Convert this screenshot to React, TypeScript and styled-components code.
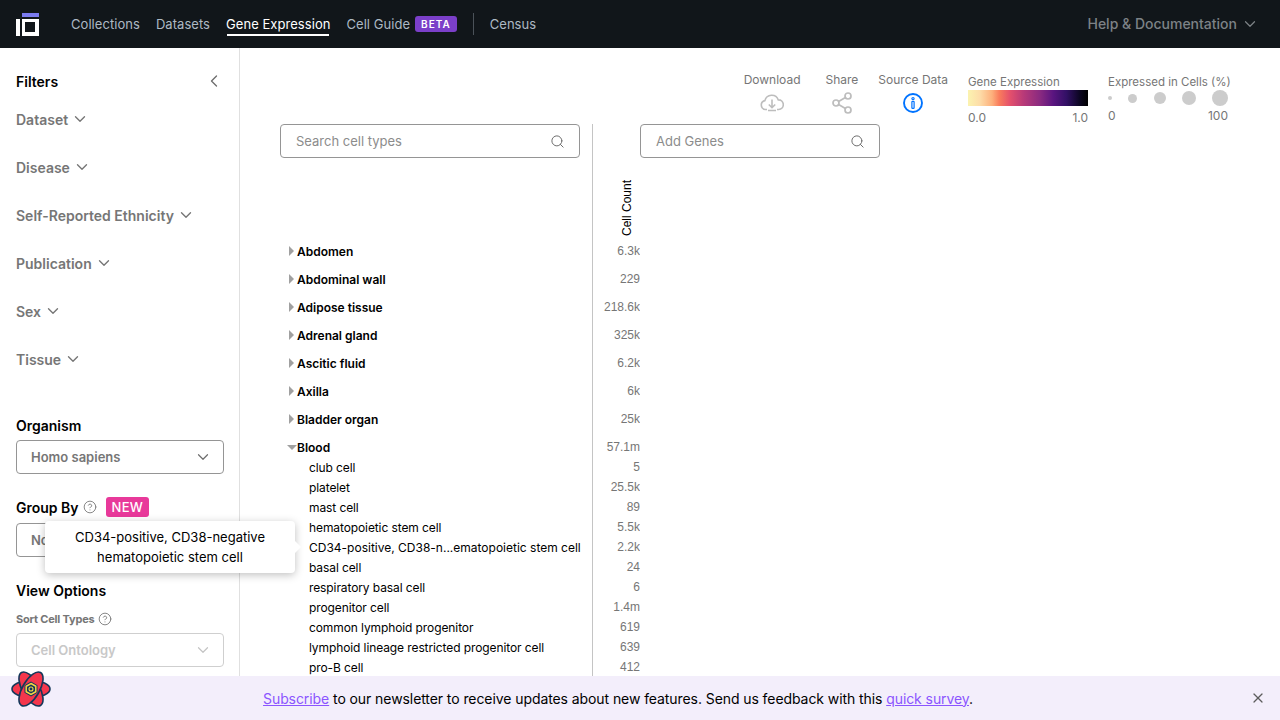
import styled, { createGlobalStyle } from 'styled-components';
import { ChevronDown, ChevronLeft, CircleHelp, Search, Share2, X } from 'lucide-react';

const GlobalStyle = createGlobalStyle`
  html, body {
    margin: 0;
    height: 100%;
    overflow: hidden;
    background: #fff;
    font-family: Inter, "Liberation Sans", sans-serif;
    color: #000;
  }
  * { box-sizing: border-box; }
`;

const Page = styled.div`
  height: 720px;
  display: flex;
  flex-direction: column;
  overflow: hidden;
  position: relative;
`;

const Header = styled.header`
  height: 48px;
  flex: none;
  background: #11161a;
  display: flex;
  align-items: center;
  padding: 0 21px 0 16px;
`;

const Nav = styled.nav`
  display: flex;
  align-items: center;
  gap: 16px;
  margin-left: 31px;
  flex: 1;
`;

const NavLink = styled.a<{ $active?: boolean }>`
  font-size: 13px;
  line-height: 20px;
  letter-spacing: 0.05px;
  height: 20px;
  color: ${props => (props.$active ? '#fff' : '#adb9c4')};
  box-shadow: ${props => (props.$active ? '0 3px 0 -1px #fff' : 'none')};
`;

const NavGuide = styled.span`
  display: flex;
  align-items: center;
  gap: 5px;
`;

const BetaBadge = styled.span`
  height: 16px;
  padding: 0 6px;
  border-radius: 3px;
  background: #7b3fc9;
  color: #fff;
  font-size: 10px;
  font-weight: 600;
  line-height: 16px;
  letter-spacing: 1px;
`;

const NavDivider = styled.span`
  width: 1px;
  height: 22px;
  background: #4b5259;
`;

const HelpLink = styled.a`
  display: flex;
  align-items: center;
  gap: 4px;
  padding-bottom: 1px;
  font-size: 14px;
  font-weight: 500;
  color: #7d8286;
`;

const Body = styled.div`
  flex: 1;
  display: flex;
  min-height: 0;
`;

const Sidebar = styled.aside`
  width: 240px;
  flex: none;
  border-right: 1px solid #e0e0e0;
  padding: 23px 15px 0 16px;
  overflow: hidden;
`;

const FiltersTitle = styled.div`
  display: flex;
  align-items: center;
  justify-content: space-between;
  height: 20px;
  font-size: 14px;
  font-weight: 600;
  color: #000;
  svg { color: #6e6e6e; }
`;

const FilterList = styled.div`
  display: flex;
  flex-direction: column;
  gap: 28px;
  margin-top: 18px;
`;

const FilterItem = styled.div`
  display: flex;
  align-items: center;
  gap: 3px;
  height: 20px;
  font-size: 14px;
  font-weight: 600;
  color: #767676;
`;

const SectionLabel = styled.div<{ $top: number }>`
  display: flex;
  align-items: center;
  height: 20px;
  margin-top: ${props => props.$top}px;
  font-size: 14px;
  font-weight: 600;
  color: #000;
  svg { color: #767676; margin-left: 4px; }
`;

const SmallLabel = styled.div`
  display: flex;
  align-items: center;
  height: 16px;
  margin-top: 11px;
  font-size: 11px;
  font-weight: 700;
  letter-spacing: -0.2px;
  color: #767676;
  svg { margin-left: 4px; }
`;

const NewBadge = styled.span`
  margin-left: 9px;
  height: 20px;
  padding: 0 6px;
  border-radius: 3px;
  background: #e8399a;
  color: #fff;
  font-size: 13px;
  font-weight: 500;
  line-height: 20px;
  letter-spacing: 0.3px;
`;

const SelectBox = styled.div<{ $disabled?: boolean; $top: number }>`
  height: 34px;
  width: 208px;
  margin-top: ${props => props.$top}px;
  padding: 0 11px 0 14px;
  display: flex;
  align-items: center;
  justify-content: space-between;
  border: 1px solid ${props => (props.$disabled ? '#cfcfcf' : '#959595')};
  border-radius: 4px;
  font-size: 13px;
  font-weight: 600;
  color: ${props => (props.$disabled ? '#c8c8c8' : '#767676')};
  svg { color: ${props => (props.$disabled ? '#c4c4c4' : '#6e6e6e')}; }
`;

const Main = styled.main`
  flex: 1;
  min-width: 0;
  padding-left: 40px;
`;

const LegendBar = styled.div`
  height: 76px;
  display: flex;
  justify-content: flex-end;
  padding: 24px 52px 0 0;
  color: #767676;
`;

const ActionGroup = styled.div`
  display: flex;
  margin-right: 20px;
  font-size: 12px;
`;

const Action = styled.div<{ $left?: number }>`
  display: flex;
  flex-direction: column;
  align-items: center;
  gap: 5px;
  line-height: 16px;
  margin-left: ${props => props.$left ?? 0}px;
`;

const IconSlot = styled.div`
  height: 20px;
  display: flex;
  align-items: center;
  justify-content: center;
  svg { flex: none; }
`;

const Legend = styled.div<{ $width: number }>`
  width: ${props => props.$width}px;
  padding-top: 2px;
  font-size: 11.5px;
  line-height: 16px;
  white-space: nowrap;
`;

const GeneLegend = styled(Legend)`
  margin-right: 20px;
`;

const ColorBar = styled.div`
  height: 16px;
  background: linear-gradient(
    90deg,
    #fbf3b0 0%,
    #fddca8 10%,
    #fdb07c 20%,
    #f97c5c 26%,
    #e4506c 35%,
    #b93a78 46%,
    #8a2a80 60%,
    #5a1580 71%,
    #321065 82%,
    #0c0622 93%,
    #000 100%
  );
`;

const Scale = styled.div<{ $top: number }>`
  display: flex;
  justify-content: space-between;
  font-size: 12px;
  line-height: 16px;
  margin-top: ${props => props.$top}px;
`;

const DotRow = styled.div`
  height: 16px;
  display: flex;
  align-items: center;
  justify-content: space-between;
`;

const Dot = styled.span<{ $size: number }>`
  width: ${props => props.$size}px;
  height: ${props => props.$size}px;
  border-radius: 50%;
  background: #ccc;
`;

const Chart = styled.div`
  display: flex;
  align-items: flex-start;
`;

const SearchBox = styled.div<{ $width: number }>`
  width: ${props => props.$width}px;
  height: 34px;
  flex: none;
  padding: 0 14px 0 15px;
  display: flex;
  align-items: center;
  justify-content: space-between;
  border: 1px solid #959595;
  border-radius: 4px;
  font-size: 13px;
  color: #8c8c8c;
  svg { color: #6e6e6e; }
`;

const TypesPanel = styled.div`
  width: 360px;
  flex: none;
  height: 552px;
  overflow: hidden;
`;

const TypesTop = styled.div`
  width: 313px;
  height: 113px;
  border-right: 1px solid #c4c4c4;
  position: relative;
`;

const CountHeader = styled.div`
  position: absolute;
  left: 340px;
  top: 56px;
  height: 56px;
  writing-mode: vertical-rl;
  transform: rotate(180deg);
  font-family: "Liberation Sans", Arial, sans-serif;
  font-size: 12px;
  line-height: 14px;
  white-space: nowrap;
`;

const Row = styled.div<{ $height: number }>`
  display: grid;
  grid-template-columns: 313px 47px;
  height: ${props => props.$height}px;
`;

const NameCell = styled.div<{ $child?: boolean; $exact?: boolean; $inset?: number }>`
  display: flex;
  align-items: center;
  border-right: 1px solid #c4c4c4;
  padding-left: ${props => (props.$child ? 29 : 17)}px;
  padding-top: ${props => props.$inset ?? 0}px;
  font-size: 12px;
  font-weight: ${props => (props.$child ? 400 : 600)};
  letter-spacing: ${props => (props.$child && !props.$exact ? '-0.1px' : '0')};
  white-space: nowrap;
`;

const Caret = styled.span<{ $open?: boolean }>`
  width: 0;
  height: 0;
  margin-left: ${props => (props.$open ? -10 : -8)}px;
  margin-right: ${props => (props.$open ? 0 : 3)}px;
  ${props =>
    props.$open
      ? `border-left: 5px solid transparent;
         border-right: 5px solid transparent;
         border-top: 5px solid #a0a0a0;`
      : `border-top: 5px solid transparent;
         border-bottom: 5px solid transparent;
         border-left: 5px solid #a0a0a0;`}
`;

const CountCell = styled.div<{ $inset?: number }>`
  display: flex;
  align-items: center;
  justify-content: flex-end;
  padding-top: ${props => props.$inset ?? 0}px;
  font-family: "Liberation Sans", Arial, sans-serif;
  font-size: 12px;
  color: #767676;
`;

const Tooltip = styled.div`
  position: absolute;
  left: 45px;
  top: 521px;
  width: 250px;
  height: 52px;
  padding: 6px 16px;
  background: #fff;
  border-radius: 4px;
  box-shadow: 0 2px 8px rgba(0, 0, 0, 0.25);
  font-size: 13px;
  line-height: 20px;
  text-align: center;
  color: #000;

  &::after {
    content: '';
    position: absolute;
    right: -6px;
    top: 20px;
    border-top: 6px solid transparent;
    border-bottom: 6px solid transparent;
    border-left: 6px solid #fff;
  }
`;

const Banner = styled.div`
  position: absolute;
  left: 0;
  right: 0;
  bottom: 0;
  height: 44px;
  background: #f3eefb;
  display: flex;
  align-items: center;
  justify-content: center;
  font-size: 14px;
  letter-spacing: -0.08px;
  padding-right: 44px;

  a {
    color: #8b55ff;
    text-decoration: underline;
  }
`;

const BannerLogo = styled.svg`
  position: absolute;
  left: 10px;
  top: -6px;
`;

const BannerClose = styled.span`
  position: absolute;
  right: 14px;
  top: 14px;
  height: 16px;
  color: #5c5c5c;
`;

const tissues = [
  ['Abdomen', '6.3k'],
  ['Abdominal wall', '229'],
  ['Adipose tissue', '218.6k'],
  ['Adrenal gland', '325k'],
  ['Ascitic fluid', '6.2k'],
  ['Axilla', '6k'],
  ['Bladder organ', '25k'],
];

const bloodCells = [
  ['club cell', '5'],
  ['platelet', '25.5k'],
  ['mast cell', '89'],
  ['hematopoietic stem cell', '5.5k'],
  ['CD34-positive, CD38-n...ematopoietic stem cell', '2.2k'],
  ['basal cell', '24'],
  ['respiratory basal cell', '6'],
  ['progenitor cell', '1.4m'],
  ['common lymphoid progenitor', '619'],
  ['lymphoid lineage restricted progenitor cell', '639'],
  ['pro-B cell', '412'],
];

const filters = ['Dataset', 'Disease', 'Self-Reported Ethnicity', 'Publication', 'Sex', 'Tissue'];

const Logo = () => (
  <svg width="24" height="24" viewBox="0 0 24 24">
    <rect x="6" y="1" width="17" height="4" fill="#7b7bf0" />
    <rect x="0" y="7" width="4" height="17" fill="#fff" />
    <path d="M6 7h17v17H6zM9 10v10h10V10z" fill="#fff" fillRule="evenodd" />
  </svg>
);

const CloudIcon = () => (
  <svg width="24" height="20" viewBox="0 0 24 20" fill="none" stroke="#bdbdbd" strokeWidth="1.6">
    <path d="M7 16.5H5.5a4.5 4.5 0 0 1-.6-8.9 7 7 0 0 1 13.4-.7 4.8 4.8 0 0 1 .4 9.6H17" />
    <path d="M12 6.5v8M8.8 11.5l3.2 3.2 3.2-3.2M8 17.5h8" />
  </svg>
);

const InfoIcon = () => (
  <svg width="20" height="20" viewBox="0 0 20 20" fill="none" stroke="#0073ff" strokeWidth="1.9">
    <circle cx="10" cy="10" r="9" />
    <circle cx="10" cy="5.6" r="1.1" strokeWidth="1.2" />
    <rect x="8.9" y="8.4" width="2.2" height="7" rx="0.6" strokeWidth="1.2" />
  </svg>
);

const AtomLogo = () => (
  <BannerLogo width="42" height="40" viewBox="0 0 42 40">
    <g fill="#f4364c" stroke="#14375a" strokeWidth="1.6">
      <ellipse cx="21" cy="19" rx="19" ry="8.5" />
      <ellipse cx="21" cy="19" rx="19" ry="8.5" transform="rotate(60 21 19)" />
      <ellipse cx="21" cy="19" rx="19" ry="8.5" transform="rotate(120 21 19)" />
    </g>
    <path d="M21 11.5l6.5 3.75v7.5L21 26.5l-6.5-3.75v-7.5z" fill="#14375a" />
    <path d="M21 13.5l4.8 2.75v5.5L21 24.5l-4.8-2.75v-5.5z" fill="none" stroke="#f6d743" strokeWidth="1.5" />
    <circle cx="21" cy="19" r="2" fill="none" stroke="#f6d743" strokeWidth="1.1" />
  </BannerLogo>
);

export default function App() {
  return (
    <Page>
      <GlobalStyle />
      <Header>
        <Logo />
        <Nav>
          <NavLink>Collections</NavLink>
          <NavLink>Datasets</NavLink>
          <NavLink $active>Gene Expression</NavLink>
          <NavGuide>
            <NavLink>Cell Guide</NavLink>
            <BetaBadge>BETA</BetaBadge>
          </NavGuide>
          <NavDivider />
          <NavLink>Census</NavLink>
        </Nav>
        <HelpLink>
          Help &amp; Documentation
          <ChevronDown size={18} strokeWidth={1.6} />
        </HelpLink>
      </Header>
      <Body>
        <Sidebar>
          <FiltersTitle>
            Filters
            <ChevronLeft size={20} strokeWidth={1.6} />
          </FiltersTitle>
          <FilterList>
            {filters.map(name => (
              <FilterItem key={name}>
                {name}
                <ChevronDown size={18} strokeWidth={1.8} />
              </FilterItem>
            ))}
          </FilterList>
          <SectionLabel $top={46}>Organism</SectionLabel>
          <SelectBox $top={5}>
            Homo sapiens
            <ChevronDown size={18} strokeWidth={1.6} />
          </SelectBox>
          <SectionLabel $top={23}>
            Group By
            <CircleHelp size={14} strokeWidth={1.5} />
            <NewBadge>NEW</NewBadge>
          </SectionLabel>
          <SelectBox $top={6}>
            None
            <ChevronDown size={18} strokeWidth={1.6} />
          </SelectBox>
          <SectionLabel $top={23}>View Options</SectionLabel>
          <SmallLabel>
            Sort Cell Types
            <CircleHelp size={14} strokeWidth={1.5} />
          </SmallLabel>
          <SelectBox $disabled $top={6}>
            Cell Ontology
            <ChevronDown size={18} strokeWidth={1.6} />
          </SelectBox>
        </Sidebar>
        <Main>
          <LegendBar>
            <ActionGroup>
              <Action>
                Download
                <IconSlot>
                  <CloudIcon />
                </IconSlot>
              </Action>
              <Action $left={25}>
                Share
                <IconSlot>
                  <Share2 size={24} strokeWidth={1.7} color="#bdbdbd" />
                </IconSlot>
              </Action>
              <Action $left={20}>
                Source Data
                <IconSlot>
                  <InfoIcon />
                </IconSlot>
              </Action>
            </ActionGroup>
            <GeneLegend $width={120}>
              Gene Expression
              <ColorBar />
              <Scale $top={4}>
                <span>0.0</span>
                <span>1.0</span>
              </Scale>
            </GeneLegend>
            <Legend $width={120}>
              Expressed in Cells (%)
              <DotRow>
                <Dot $size={4} />
                <Dot $size={9} />
                <Dot $size={12} />
                <Dot $size={14} />
                <Dot $size={16} />
              </DotRow>
              <Scale $top={2}>
                <span>0</span>
                <span>100</span>
              </Scale>
            </Legend>
          </LegendBar>
          <Chart>
            <TypesPanel>
              <TypesTop>
                <SearchBox $width={300}>
                  Search cell types
                  <Search size={15} strokeWidth={1.6} />
                </SearchBox>
                <CountHeader>Cell Count</CountHeader>
              </TypesTop>
              {tissues.map(([name, count]) => (
                <Row key={name} $height={28}>
                  <NameCell>
                    <Caret />
                    {name}
                  </NameCell>
                  <CountCell>{count}</CountCell>
                </Row>
              ))}
              <Row $height={24}>
                <NameCell $inset={4}>
                  <Caret $open />
                  Blood
                </NameCell>
                <CountCell $inset={4}>57.1m</CountCell>
              </Row>
              {bloodCells.map(([name, count]) => (
                <Row key={name} $height={20}>
                  <NameCell $child $exact={name.startsWith('CD34')}>
                    {name}
                  </NameCell>
                  <CountCell>{count}</CountCell>
                </Row>
              ))}
            </TypesPanel>
            <SearchBox $width={240}>
              Add Genes
              <Search size={15} strokeWidth={1.6} />
            </SearchBox>
          </Chart>
        </Main>
      </Body>
      <Tooltip>CD34-positive, CD38-negative hematopoietic stem cell</Tooltip>
      <Banner>
        <AtomLogo />
        <span>
          <a>Subscribe</a> to our newsletter to receive updates about new features. Send us feedback with this{' '}
          <a>quick survey</a>.
        </span>
        <BannerClose>
          <X size={16} strokeWidth={1.8} />
        </BannerClose>
      </Banner>
    </Page>
  );
}
